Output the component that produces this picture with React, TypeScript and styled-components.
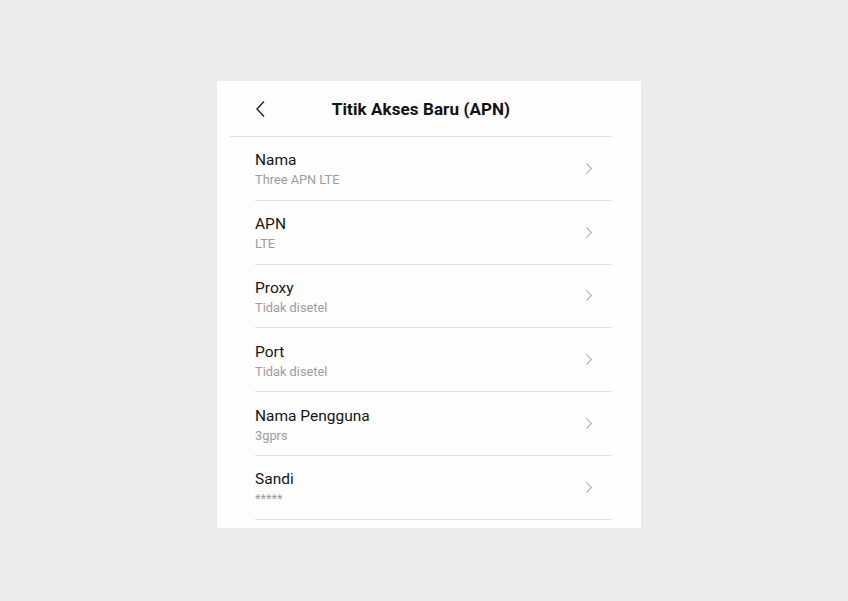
import styled, { createGlobalStyle } from "styled-components";

const GlobalStyle = createGlobalStyle`
  html, body {
    margin: 0;
    padding: 0;
    background: #ebebeb;
  }
  body {
    font-family: Roboto, "Noto Sans", "Liberation Sans", sans-serif;
  }
`;

const Page = styled.div`
  width: 848px;
  height: 601px;
  padding: 81px 0 0 217px;
  box-sizing: border-box;
  display: flex;
`;

const Card = styled.div`
  width: 424px;
  height: 447px;
  background: #fefefe;
  box-sizing: border-box;
  padding: 0 29px 0 13px;
  display: flex;
  flex-direction: column;
`;

const Header = styled.div`
  position: relative;
  height: 55px;
  border-bottom: 1px solid #e2e2e2;
  display: flex;
  align-items: center;
  justify-content: center;
`;

const BackButton = styled.div`
  position: absolute;
  left: 25px;
  top: 19px;
  width: 12px;
  height: 18px;
  display: flex;
`;

const Title = styled.h1`
  margin: 0;
  font-size: 17px;
  font-weight: 700;
  color: #111;
  letter-spacing: 0.1px;
`;

const List = styled.div`
  padding-left: 25px;
  display: flex;
  flex-direction: column;
`;

const Row = styled.div`
  height: 62.8px;
  border-bottom: 1px solid #e2e2e2;
  display: flex;
  align-items: center;
  justify-content: space-between;
  padding-right: 19px;
`;

const Texts = styled.div`
  display: flex;
  flex-direction: column;
  gap: 1px;
  padding-top: 3px;
`;

const Label = styled.div`
  font-size: 15.5px;
  color: #151515;
  line-height: 19px;
`;

const Value = styled.div`
  font-size: 12.8px;
  color: #9d9d9d;
  line-height: 17px;
`;

const Chevron = () => (
  <svg width="8" height="13" viewBox="0 0 8 13" fill="none">
    <path d="M1.5 1.5L6.5 6.5L1.5 11.5" stroke="#b4b4b4" strokeWidth="1.1" />
  </svg>
);

const items = [
  { label: "Nama", value: "Three APN LTE" },
  { label: "APN", value: "LTE" },
  { label: "Proxy", value: "Tidak disetel" },
  { label: "Port", value: "Tidak disetel" },
  { label: "Nama Pengguna", value: "3gprs" },
  { label: "Sandi", value: "*****" },
];

export default function App() {
  return (
    <>
      <GlobalStyle />
      <Page>
        <Card>
          <Header>
            <BackButton>
              <svg width="12" height="18" viewBox="0 0 12 18" fill="none">
                <path d="M9 1.5L2 9L9 16.5" stroke="#222" strokeWidth="1.4" />
              </svg>
            </BackButton>
            <Title>Titik Akses Baru (APN)</Title>
          </Header>
          <List>
            {items.map((item) => (
              <Row key={item.label}>
                <Texts>
                  <Label>{item.label}</Label>
                  <Value>{item.value}</Value>
                </Texts>
                <Chevron />
              </Row>
            ))}
          </List>
        </Card>
      </Page>
    </>
  );
}
